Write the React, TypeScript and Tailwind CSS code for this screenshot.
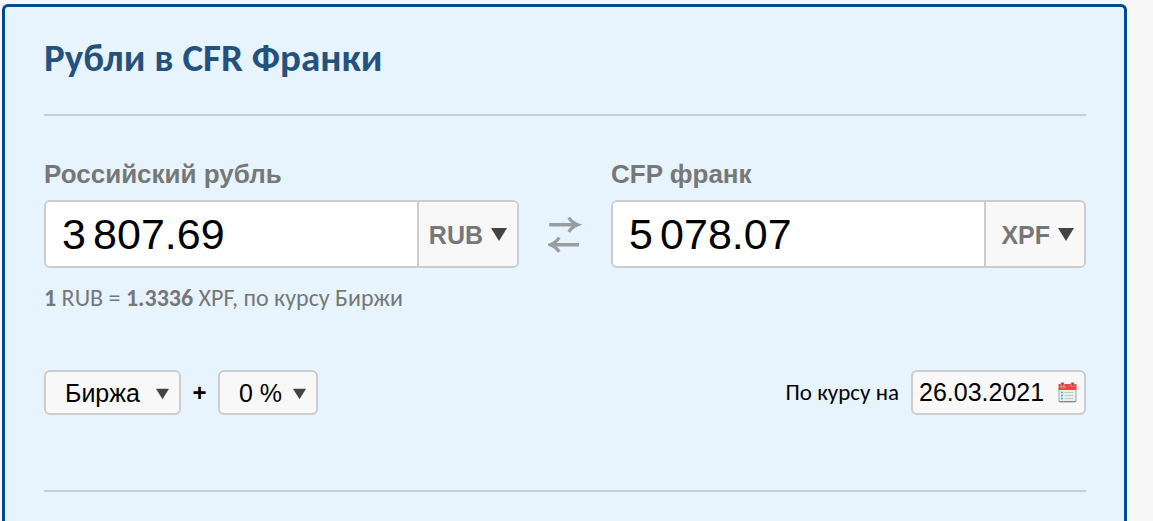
import { useState } from "react";
import type { ReactNode } from "react";

const GROUP_SPACE = "\u2006";

function Arrow({ className }: { className: string }) {
  return (
    <svg viewBox="0 0 16 13" aria-hidden="true" className={`pointer-events-none absolute ${className}`}>
      <path d="M0 0H16L8 13Z" fill="#444" />
    </svg>
  );
}

type CurrencyFieldProps = {
  id: string;
  label: string;
  initial: string;
  code: string;
};

function CurrencyField({ id, label, initial, code }: CurrencyFieldProps) {
  const [value, setValue] = useState(initial);
  return (
    <div className="min-w-0 flex-1">
      <label htmlFor={id} className="block text-[26px] leading-8 font-bold text-[#777]">
        {label}
      </label>
      <div className="mt-[10px] flex h-[68px] overflow-hidden rounded-md border-2 border-[#ccc] bg-white">
        <input
          id={id}
          value={value}
          onChange={(e) => setValue(e.target.value)}
          className="min-w-0 flex-1 bg-white px-4 text-[43px] text-black outline-none"
        />
        <div className="relative w-[100px] border-l-2 border-[#ccc] bg-[#f8f8f8]">
          <select
            aria-label={`${label}: валюта`}
            defaultValue={code}
            className="h-full w-full appearance-none pt-1 pr-[34px] text-[25px] font-bold text-[#777] outline-none [text-align-last:right]"
          >
            <option>RUB</option>
            <option>XPF</option>
          </select>
          <Arrow className="top-[26px] right-[10px] h-[13px] w-4" />
        </div>
      </div>
    </div>
  );
}

type OptionSelectProps = {
  label: string;
  width: string;
  children: ReactNode;
};

function OptionSelect({ label, width, children }: OptionSelectProps) {
  return (
    <div className={`relative h-[45px] rounded-md border-2 border-[#ccc] bg-[#f8f8f8] ${width}`}>
      <select
        aria-label={label}
        className="h-full w-full appearance-none pt-[2px] pl-[19px] text-[25px] text-black outline-none"
      >
        {children}
      </select>
      <Arrow className="top-4 right-[10px] h-3 w-[13px]" />
    </div>
  );
}

function SwapIcon() {
  return (
    <svg viewBox="0 0 34 38" aria-hidden="true" className="h-[38px] w-[34px]" fill="none" stroke="#999da1">
      <path d="M1.2 9.7H29M31 29.7H3" strokeWidth="3.4" />
      <path d="M20.8 2.5Q23.5 7.3 29.8 9.7Q23.5 12.1 20.8 16.9" strokeWidth="3.2" />
      <path d="M11.2 22.5Q8.5 27.3 2.2 29.7Q8.5 32.1 11.2 36.9" strokeWidth="3.2" />
    </svg>
  );
}

function CalendarIcon() {
  return (
    <svg viewBox="0 0 19 21" aria-hidden="true" className="h-[21px] w-[19px]">
      <path d="M1 6H18V19Q18 20 17 20H2Q1 20 1 19Z" fill="#e9efef" stroke="#9ba6a6" strokeWidth="1" />
      <path d="M0.5 2H18.5V8H0.5Z" fill="#ee4545" />
      <path d="M2 5H8" stroke="#f79b9b" />
      <path d="M3 0.5H6V4H3ZM13 0.5H16V4H13Z" fill="#984447" stroke="#bbb" strokeWidth="0.7" />
      <path d="M3 10.5H5" stroke="#38c95c" strokeWidth="1.6" />
      <path d="M3 13.5H5" stroke="#39a9df" strokeWidth="1.4" />
      <path d="M3 16.5H5" stroke="#58a5ad" strokeWidth="1.4" />
      <path d="M6.5 10.5H15M6.5 13.5H15M6.5 16.5H15" stroke="#becaca" />
      <path d="M1 19.5H18" stroke="#7f8b8b" />
    </svg>
  );
}

export default function App() {
  const [date, setDate] = useState("26.03.2021");
  return (
    <div className="flex min-h-screen flex-col bg-[#f7f7f7] pt-1 pr-[26px] pl-[2px] font-['Liberation_Sans',Arial,sans-serif]">
      <main className="flex-1 rounded-t-md border-3 border-b-0 border-[#004a93] bg-[#e7f4fe] pr-[38px] pl-[39px]">
        <h1 className="border-b-2 border-[#ccc] pt-[27px] pb-8 font-[Carlito,Calibri,'Open_Sans',sans-serif] text-[39px] leading-12 font-bold text-[#25527d]">
          Рубли в CFR Франки
        </h1>

        <form onSubmit={(e) => e.preventDefault()} className="border-b-2 border-[#ccc] pt-[42px] pb-[75px]">
          <div className="flex items-end">
            <CurrencyField id="amount-from" label="Российский рубль" initial={`3${GROUP_SPACE}807.69`} code="RUB" />
            <button type="button" aria-label="Поменять валюты местами" className="flex h-[68px] w-[92px] items-center justify-center">
              <SwapIcon />
            </button>
            <CurrencyField id="amount-to" label="CFP франк" initial={`5${GROUP_SPACE}078.07`} code="XPF" />
          </div>

          <p className="mt-4 font-[Carlito,Calibri,'Open_Sans',sans-serif] text-[24px] leading-7 text-[#777]">
            <b>1</b> RUB = <b>1.3336</b> XPF, по курсу Биржи
          </p>

          <div className="mt-[58px] flex items-center">
            <OptionSelect label="Источник курса" width="w-[137px]">
              <option>Биржа</option>
              <option>ЦБ РФ</option>
            </OptionSelect>
            <span className="w-[37px] text-center text-2xl font-bold text-black">+</span>
            <OptionSelect label="Процент" width="w-[100px]">
              <option>0 %</option>
              <option>1 %</option>
            </OptionSelect>
            <label
              htmlFor="rate-date"
              className="mr-3 ml-auto font-[Carlito,Calibri,'Open_Sans',sans-serif] text-[23px] text-black"
            >
              По курсу на
            </label>
            <div className="flex h-[45px] w-[175px] items-center rounded-md border-2 border-[#ccc] bg-[#f8f8f8] pr-[7px] pl-[6px]">
              <input
                id="rate-date"
                value={date}
                onChange={(e) => setDate(e.target.value)}
                className="min-w-0 flex-1 text-[25px] text-black outline-none"
              />
              <button type="button" aria-label="Открыть календарь">
                <CalendarIcon />
              </button>
            </div>
          </div>
        </form>
      </main>
    </div>
  );
}
